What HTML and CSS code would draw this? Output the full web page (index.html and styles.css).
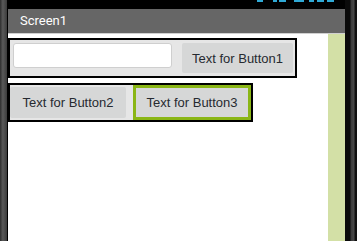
FILE: index.html
```html
<!DOCTYPE html>
<html lang="en">
<head>
    <meta charset="UTF-8">
    <meta name="viewport" content="width=device-width, initial-scale=1.0">
    <title>Screen1</title>
    <link rel="stylesheet" href="styles.css">
</head>
<body>
    <div class="device">
        <div class="bezel-left"></div>
        <div class="screen">
            <div class="status-bar">
                <svg class="status-icons" width="80" height="9" viewBox="0 0 80 9">
                    <rect x="0" y="0" width="6" height="2" fill="#2fa9d6"/>
                    <rect x="16" y="0" width="4" height="2" fill="#2fa9d6"/>
                    <rect x="22" y="0" width="7" height="2" fill="#2fa9d6"/>
                    <rect x="37" y="0" width="10" height="2" fill="#2fa9d6"/>
                    <rect x="52" y="0" width="5" height="2" fill="#2fa9d6"/>
                    <rect x="60" y="0" width="7" height="2" fill="#2fa9d6"/>
                    <rect x="70" y="0" width="7" height="2" fill="#2fa9d6"/>
                </svg>
            </div>
            <div class="title-bar">Screen1</div>
            <div class="content">
                <div class="form">
                    <div class="arrangement row-one">
                        <input type="text" class="textbox" />
                        <button class="btn btn-one">Text for Button1</button>
                    </div>
                    <div class="arrangement row-two">
                        <button class="btn btn-two">Text for Button2</button>
                        <button class="btn btn-three selected">Text for Button3</button>
                    </div>
                </div>
                <div class="scroll-strip"></div>
            </div>
        </div>
        <div class="bezel-right"></div>
    </div>
</body>
</html>
```

FILE: styles.css
```css
:root {
    --title-bg: #666666;
    --row-bg: #e6e6e6;
    --button-bg: #d6d7d7;
    --button-text: #262a30;
    --strip-green: #d3e0a6;
    --selected-green: #8ab615;
}

* {
    margin: 0;
    padding: 0;
    box-sizing: border-box;
}

body {
    font-family: 'Liberation Sans', Arial, sans-serif;
    background: #000;
    width: 357px;
    height: 241px;
    overflow: hidden;
}

.device {
    display: flex;
    height: 241px;
}

.bezel-left {
    width: 8px;
    background: linear-gradient(to right, #2e2e2e, #5a5a5a 40%, #3c3c3c);
    border-right: 1px solid #000;
}

.bezel-right {
    width: 12px;
    background: linear-gradient(to right, #0a0a0a 0, #0a0a0a 5px, #3a3a3a 6px, #4a4a4a 9px, #111 10px);
}

.screen {
    width: 337px;
    display: flex;
    flex-direction: column;
}

.status-bar {
    height: 9px;
    background: #000;
    display: flex;
    justify-content: flex-end;
    padding-right: 8px;
}

.title-bar {
    height: 25px;
    background: var(--title-bg);
    border-bottom: 1px solid #d0d0d0;
    color: #fff;
    font-family: Roboto, 'Liberation Sans', sans-serif;
    font-size: 13px;
    line-height: 24px;
    padding-left: 12px;
}

.content {
    flex: 1;
    display: flex;
    background: #fff;
}

.form {
    width: 320px;
    padding-top: 4px;
}

.scroll-strip {
    width: 17px;
    background: var(--strip-green);
}

.arrangement {
    display: flex;
    align-items: flex-start;
    background: var(--row-bg);
    border: 2px solid #000;
}

.row-one {
    width: 289px;
    height: 40px;
    padding: 3px 2px 0 3px;
}

.row-two {
    width: 245px;
    height: 39px;
    margin-top: 5px;
}

.textbox {
    width: 159px;
    height: 25px;
    background: #fff;
    border: 1px solid #cfcfcf;
    border-radius: 3px;
    outline: none;
}

.btn {
    background: var(--button-bg);
    color: var(--button-text);
    border: none;
    border-radius: 2px;
    font-family: 'Liberation Sans', Arial, sans-serif;
    font-size: 13px;
    text-align: center;
}

.btn-one {
    width: 111px;
    height: 30px;
    margin-left: 10px;
}

.btn-two {
    width: 116px;
    height: 31px;
    margin-top: 2px;
}

.btn-three {
    width: 118px;
    height: 35px;
    margin-left: 7px;
}

.selected {
    border: 3px solid var(--selected-green);
    border-radius: 0;
}
```
